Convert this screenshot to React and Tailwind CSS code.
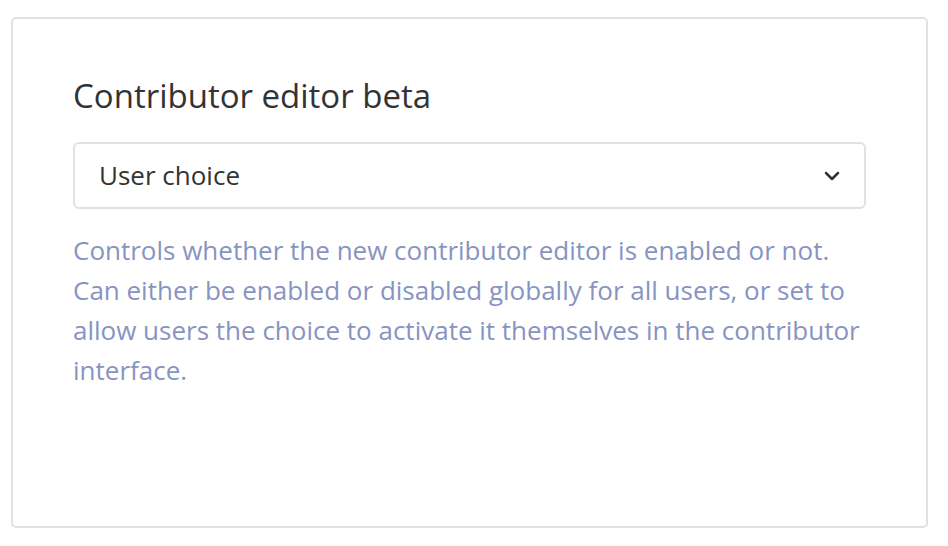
export default function App() {
  return (
    <div className="w-[948px] h-[546px] bg-white pt-[17px] pl-[11px]" style={{ fontFamily: '"Open Sans", sans-serif' }}>
      <div className="w-[917px] h-[511px] border-2 border-[#e1e1e1] rounded-[5px] px-[60px] pt-[55px]">
        <h2 className="text-[33px] leading-[44px] text-[#333333]">Contributor editor beta</h2>
        <div className="mt-[24px] h-[67px] border-2 border-[#e1e1e1] rounded-[6px] flex items-center justify-between pl-[24px] pr-[24px]">
          <span className="text-[26px] text-[#333333]">User choice</span>
          <svg width="16" height="10" viewBox="0 0 16 10" fill="none">
            <path d="M2 2l6 6 6-6" stroke="#333" strokeWidth="2.5" strokeLinecap="round" strokeLinejoin="round" />
          </svg>
        </div>
        <p className="mt-[21px] text-[26px] leading-[40px] text-[#8794c1]">
          Controls whether the new contributor editor is enabled or not. Can either be enabled or disabled globally for all users, or set to allow users the choice to activate it themselves in the contributor interface.
        </p>
      </div>
    </div>
  );
}
